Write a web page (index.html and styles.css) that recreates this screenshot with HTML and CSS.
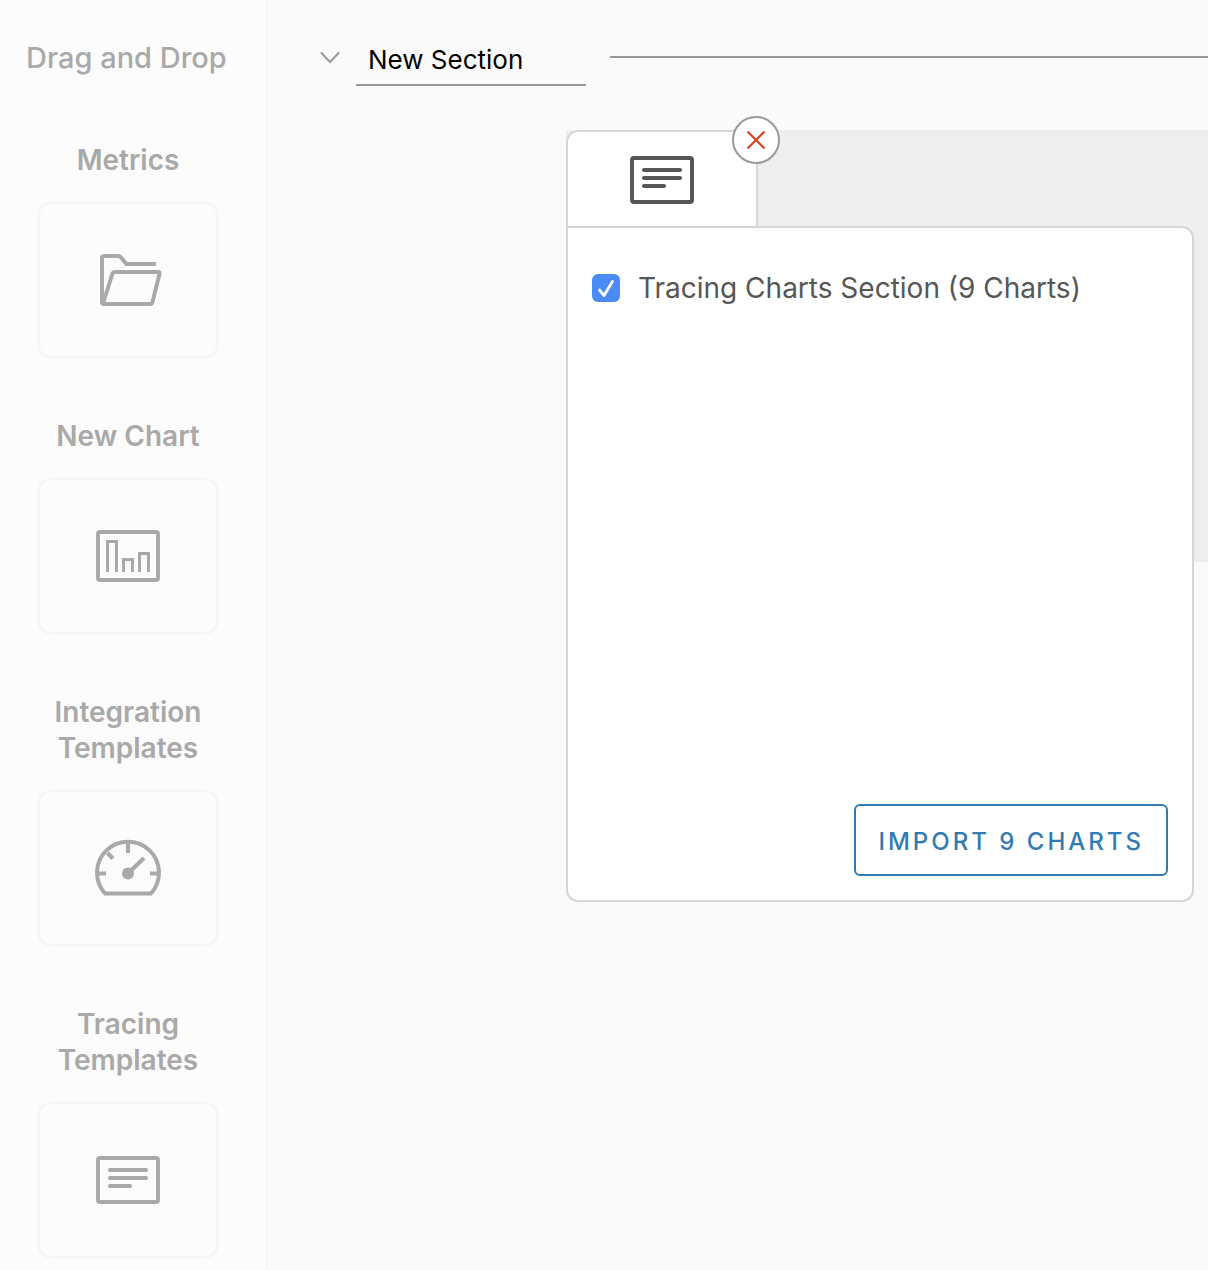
FILE: index.html
```html
<!DOCTYPE html>
<html lang="en">
<head>
<meta charset="utf-8">
<meta name="viewport" content="width=device-width, initial-scale=1">
<title>Dashboard editor</title>
<link rel="stylesheet" href="styles.css">
</head>
<body>
<div class="layout">
  <aside class="sidebar">
    <h1 class="sidebar-title">Drag and Drop</h1>
    <ul class="widgets">
      <li class="widget">
        <h2 class="widget-label">Metrics</h2>
        <div class="widget-tile">
          <svg class="icon" viewBox="0 0 72 72" aria-hidden="true"><path d="M10 60V14a2 2 0 0 1 2-2h14q2 0 3 1.500L34.500 20H64M10.500 61 20 31q.8-3 3-3h43q2 0 1.500 2L60.500 58q-.5 2-2.500 2H12q-2 0-2-2"/></svg>
        </div>
      </li>
      <li class="widget">
        <h2 class="widget-label">New Chart</h2>
        <div class="widget-tile">
          <svg class="icon" viewBox="0 0 72 72" aria-hidden="true"><rect x="6" y="12" width="60" height="48" rx="2"/><path class="bars" d="M15.500 52V21.500h9V52M31.500 52V39.500h9V52M47.500 52V33.500h9V52"/></svg>
        </div>
      </li>
      <li class="widget">
        <h2 class="widget-label">Integration Templates</h2>
        <div class="widget-tile">
          <svg class="icon" viewBox="0 0 72 72" aria-hidden="true"><path d="M13 61.500A31 31 0 1 1 59 61.500ZM36 10v11M4 41.500h10M58 41.500h10M15.500 21l5.500 5.500M36 41.500 52 26"/><circle class="solid" cx="36" cy="41.500" r="6"/></svg>
        </div>
      </li>
      <li class="widget">
        <h2 class="widget-label">Tracing Templates</h2>
        <div class="widget-tile">
          <svg class="icon" viewBox="0 0 72 72" aria-hidden="true"><rect x="6" y="14" width="60" height="44" rx="2"/><path class="lines" d="M18 26h36M18 34h36M18 42h20"/></svg>
        </div>
      </li>
    </ul>
  </aside>
  <main class="canvas">
    <header class="section-header">
      <button class="collapse" type="button" aria-label="Collapse section">
        <svg class="chevron" viewBox="0 0 20 14" aria-hidden="true"><path d="M1.500 3 10 12 18.500 3"/></svg>
      </button>
      <input class="section-name" type="text" value="New Section" aria-label="Section name">
      <hr class="section-rule">
    </header>
    <div class="drop-row">
      <div class="popover">
        <div class="tab">
          <svg class="icon icon-dark" viewBox="0 0 72 72" aria-hidden="true"><rect x="6" y="15" width="60" height="44" rx="2"/><path class="lines" d="M18 27h36M18 35h36M18 43h20"/></svg>
          <button class="close" type="button" aria-label="Close">
            <svg class="cross" viewBox="0 0 20 20" aria-hidden="true"><path d="M1.500 1.500l17 17M18.500 1.500l-17 17"/></svg>
          </button>
        </div>
        <form class="panel">
          <label class="option"><input class="check" type="checkbox" checked>Tracing Charts Section (9 Charts)</label>
          <button class="import" type="button">IMPORT 9 CHARTS</button>
        </form>
      </div>
    </div>
  </main>
</div>
</body>
</html>
```
FILE: styles.css
```css
* {
  box-sizing: border-box;
}

body {
  margin: 0;
  background: #fafafa;
  color: #565656;
  font: 28px/36px Inter, "Liberation Sans", sans-serif;
}

button,
input {
  font: inherit;
}

.layout {
  display: flex;
  min-height: 100vh;
}

.sidebar {
  flex: 0 0 268px;
  padding: 40px 0 12px;
  border-right: 2px solid #f7f7f7;
  background: #fcfcfc;
  color: #a9a9a9;
}

.sidebar-title {
  margin: 0 12px 66px 26px;
  font-size: 29px;
  font-weight: 500;
  white-space: nowrap;
}

.widgets {
  display: grid;
  gap: 60px;
  margin: 0 48px 0 38px;
  padding: 0;
  list-style: none;
}

.widget-label {
  margin: 0 0 24px;
  font-size: 28px;
  font-weight: 600;
  text-align: center;
}

.widget-tile {
  display: grid;
  place-items: center;
  height: 156px;
  border: 2px solid #f5f5f5;
  border-radius: 12px;
}

.icon {
  width: 72px;
  height: 72px;
  fill: none;
  stroke: #a9a9a9;
  stroke-width: 4;
}

.icon-dark {
  stroke: #565656;
}

.bars {
  stroke-width: 3;
}

.lines {
  stroke-linecap: round;
}

.solid {
  fill: #a9a9a9;
  stroke: none;
}

.canvas {
  flex: 1;
  min-width: 0;
  overflow: hidden;
}

.section-header {
  display: flex;
  align-items: center;
  height: 58px;
  margin: 28px 0 44px 52px;
}

.collapse {
  display: flex;
  padding: 0;
  border: 0;
  background: none;
}

.chevron {
  width: 20px;
  height: 14px;
  fill: none;
  stroke: #999;
  stroke-width: 2;
  stroke-linecap: round;
}

.section-name {
  width: 230px;
  height: 58px;
  margin: 0 24px 0 16px;
  padding: 6px 12px 0;
  border: 0;
  border-bottom: 2px solid #999;
  border-radius: 0;
  background: none;
  color: #000;
  font-size: 26px;
}

.section-rule {
  flex: 1;
  margin: 0;
  border: 0;
  border-top: 2px solid #999;
}

.drop-row {
  position: relative;
  height: 432px;
  margin-left: 298px;
  background: #eee;
}

.popover {
  position: absolute;
  top: 0;
  left: 0;
  width: 628px;
}

.tab {
  position: relative;
  display: grid;
  place-items: center;
  width: 192px;
  height: 98px;
  margin-bottom: -2px;
  border: 2px solid #d6d6d6;
  border-radius: 12px 0 0 0;
  background: #fff;
}

.close {
  position: absolute;
  top: -16px;
  right: -24px;
  display: grid;
  place-items: center;
  width: 48px;
  height: 48px;
  padding: 0;
  border: 2px solid #999;
  border-radius: 50%;
  background: #fff;
}

.cross {
  width: 20px;
  height: 20px;
  fill: none;
  stroke: #db3b21;
  stroke-width: 2;
}

.panel {
  display: flex;
  flex-direction: column;
  justify-content: space-between;
  min-height: 676px;
  padding: 42px 24px 24px;
  border: 2px solid #d6d6d6;
  border-radius: 0 12px 12px 12px;
  background: #fff;
}

.option {
  display: flex;
  align-items: center;
  gap: 18px;
}

.check {
  width: 28px;
  height: 28px;
  margin: 0;
  border-radius: 6px;
  appearance: none;
  background: #4b8bf5 url("data:image/svg+xml,%3Csvg xmlns='http://www.w3.org/2000/svg' viewBox='0 0 28 28'%3E%3Cpath d='M7.500 16l4.500 5.500L20.500 7.500' fill='none' stroke='white' stroke-width='2.800' stroke-linecap='round' stroke-linejoin='round'/%3E%3C/svg%3E");
}

.import {
  align-self: flex-end;
  height: 72px;
  padding: 4px 22px 0;
  border: 2px solid #317bb5;
  border-radius: 6px;
  background: #fff;
  color: #317bb5;
  font-size: 24px;
  font-weight: 500;
  letter-spacing: 3px;
}
```
